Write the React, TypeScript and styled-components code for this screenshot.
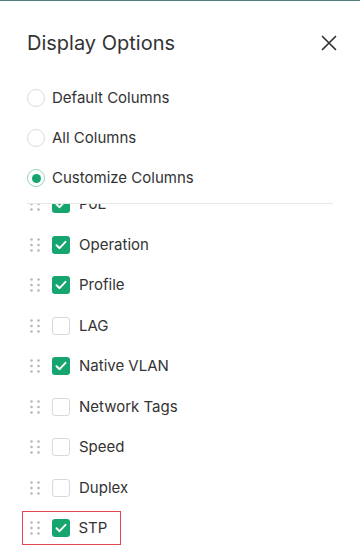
import { useLayoutEffect, useRef, useState } from 'react';
import styled, { createGlobalStyle } from 'styled-components';

type Column = {
  id: string;
  label: string;
  checked: boolean;
};

const COLUMNS: Column[] = [
  { id: 'poe', label: 'PoE', checked: true },
  { id: 'operation', label: 'Operation', checked: true },
  { id: 'profile', label: 'Profile', checked: true },
  { id: 'lag', label: 'LAG', checked: false },
  { id: 'vlan', label: 'Native VLAN', checked: true },
  { id: 'tags', label: 'Network Tags', checked: false },
  { id: 'speed', label: 'Speed', checked: false },
  { id: 'duplex', label: 'Duplex', checked: false },
  { id: 'stp', label: 'STP', checked: true },
];

const MODES = ['Default Columns', 'All Columns', 'Customize Columns'];

const ROW_PITCH = 40.5;

const CloseIcon = () => (
  <svg width="16" height="16" viewBox="0 0 16 16">
    <path d="M1.5 1.5 L14.5 14.5 M14.5 1.5 L1.5 14.5" stroke="#333" strokeWidth="1.7" strokeLinecap="round" />
  </svg>
);

const DragHandle = () => (
  <svg width="10" height="14" viewBox="0 0 10 14">
    {[1.5, 7, 12.5].map((y) =>
      [1.5, 8.5].map((x) => <circle key={`${x}-${y}`} cx={x} cy={y} r="1.3" fill="#b4b8bc" />)
    )}
  </svg>
);

const Check = () => (
  <svg width="12" height="10" viewBox="0 0 12 10">
    <path d="M1.5 5.2 L4.6 8.2 L10.5 1.8" fill="none" stroke="#fff" strokeWidth="1.9" strokeLinecap="round" strokeLinejoin="round" />
  </svg>
);

export default function App() {
  const [mode, setMode] = useState(2);
  const [columns, setColumns] = useState(COLUMNS);
  const listRef = useRef<HTMLDivElement>(null);

  // the list is shown scrolled a little, with the first row half hidden
  useLayoutEffect(() => {
    if (listRef.current) listRef.current.scrollTop = 20;
  }, []);

  const toggle = (id: string) =>
    setColumns((cols) => cols.map((c) => (c.id === id ? { ...c, checked: !c.checked } : c)));

  return (
    <>
      <GlobalStyle />
      <StyledPanel>
        <Header>
          <Title>Display Options</Title>
          <CloseButton aria-label="close">
            <CloseIcon />
          </CloseButton>
        </Header>
        <RadioGroup>
          {MODES.map((m, i) => (
            <RadioRow key={m} onClick={() => setMode(i)}>
              <RadioCircle $checked={mode === i} />
              <RadioLabel>{m}</RadioLabel>
            </RadioRow>
          ))}
        </RadioGroup>
        <Divider />
        <ColumnList ref={listRef}>
          {columns.map((c) => (
            <ColumnRow key={c.id} $highlight={c.id === 'stp'} onClick={() => toggle(c.id)}>
              <DragHandle />
              <CheckBox $checked={c.checked}>{c.checked && <Check />}</CheckBox>
              <ColumnLabel>{c.label}</ColumnLabel>
            </ColumnRow>
          ))}
        </ColumnList>
      </StyledPanel>
    </>
  );
}

const GlobalStyle = createGlobalStyle`
  html, body {
    margin: 0;
    padding: 0;
    background: #fff;
  }
  body {
    font-family: Inter, "Noto Sans", sans-serif;
    color: #333;
  }
`;

const StyledPanel = styled.div`
  height: 100vh;
  display: flex;
  flex-direction: column;
  border-top: 1px solid #4f8080;
  box-sizing: border-box;
  overflow: hidden;
`;

const Header = styled.div`
  display: flex;
  align-items: center;
  justify-content: space-between;
  padding: 27px 19px 20px 27px;
`;

const Title = styled.h2`
  margin: 0;
  font-size: 20px;
  font-weight: 400;
  line-height: 30px;
  color: #333;
`;

const CloseButton = styled.button`
  width: 24px;
  height: 24px;
  padding: 0;
  display: flex;
  align-items: center;
  justify-content: center;
  border: none;
  background: none;
  cursor: pointer;
`;

const RadioGroup = styled.div`
  display: flex;
  flex-direction: column;
  padding-left: 27px;
`;

const RadioRow = styled.div`
  display: flex;
  align-items: center;
  gap: 7px;
  height: 40px;
  cursor: pointer;
`;

const RadioLabel = styled.span`
  font-size: 15px;
  line-height: 20px;
  color: #333;
`;

const RadioCircle = styled.span<{ $checked: boolean }>`
  width: 18px;
  height: 18px;
  box-sizing: border-box;
  border-radius: 50%;
  border: 1.5px solid ${(p) => (p.$checked ? '#8fd6b8' : '#dcdcdc')};
  display: flex;
  align-items: center;
  justify-content: center;
  &::after {
    content: '';
    display: ${(p) => (p.$checked ? 'block' : 'none')};
    width: 9px;
    height: 9px;
    border-radius: 50%;
    background: #14a56c;
  }
`;

const Divider = styled.div`
  height: 1px;
  background: #e8e8e8;
  margin: 5px 27px 0;
`;

const ColumnList = styled.div`
  flex: 1;
  overflow-y: auto;
  scrollbar-width: none;
  padding: 0 0 24px 22px;
  &::-webkit-scrollbar {
    display: none;
  }
`;

const ColumnRow = styled.div<{ $highlight: boolean }>`
  display: flex;
  align-items: center;
  width: fit-content;
  height: ${ROW_PITCH}px;
  box-sizing: border-box;
  padding: 0 13px 0 8px;
  cursor: pointer;
  ${(p) =>
    p.$highlight &&
    `
    height: 34px;
    margin: 3.25px 0;
    border: 1.5px solid #e2474d;
    padding-left: 6.5px;
  `}
  > svg {
    margin-right: 12px;
  }
`;

const ColumnLabel = styled.span`
  margin-left: 9px;
  font-size: 15px;
  line-height: 20px;
  color: #333;
`;

const CheckBox = styled.span<{ $checked: boolean }>`
  width: 18px;
  height: 18px;
  box-sizing: border-box;
  border-radius: 3px;
  display: flex;
  align-items: center;
  justify-content: center;
  background: ${(p) => (p.$checked ? '#17a56f' : '#fff')};
  border: ${(p) => (p.$checked ? 'none' : '1px solid #d9d9d9')};
`;
